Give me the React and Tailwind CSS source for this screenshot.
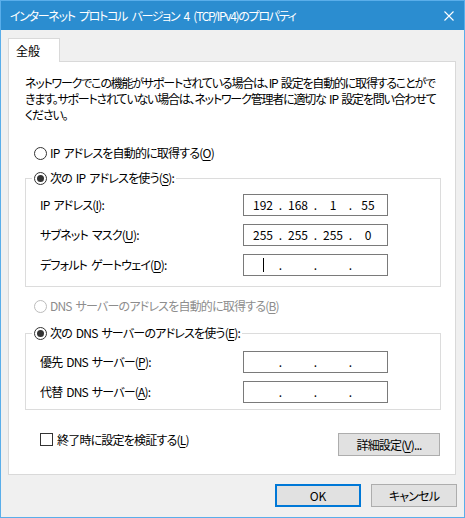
import React from "react";

function Radio({ checked, disabled }) {
  return (
    <span
      className={
        disabled
          ? "w-[13px] h-[13px] rounded-full border border-[#bcbcbc] bg-white flex items-center justify-center shrink-0"
          : "w-[13px] h-[13px] rounded-full border border-[#333333] bg-white flex items-center justify-center shrink-0"
      }
    >
      {checked && <span className="w-[7px] h-[7px] rounded-full bg-[#333333]" />}
    </span>
  );
}

function IPField({ parts = ["", "", "", ""], cursor = false }) {
  return (
    <div className="w-[145px] h-[22px] border border-[#7a7a7a] bg-white flex items-center pl-[3px] tracking-normal">
      {parts.map((p, i) => (
        <React.Fragment key={i}>
          {i === 0 && cursor ? (
            <span className="w-[32px] flex justify-center">
              <span className="w-px h-[14px] bg-black" />
            </span>
          ) : (
            <span className="w-[32px] text-center">{p}</span>
          )}
          {i < 3 && <span className="w-[3px] flex justify-center">.</span>}
        </React.Fragment>
      ))}
    </div>
  );
}

function U({ children }) {
  return <span className="underline underline-offset-2">{children}</span>;
}

function Row({ label, children }) {
  return (
    <div className="flex items-center h-[22px]">
      <span className="w-[203px]">{label}</span>
      {children}
    </div>
  );
}

export default function App() {
  return (
    <div className="w-[465px] h-[518px] border border-[#5aaeea] bg-[#f0f0f0] flex flex-col text-[12px] leading-[16px] tracking-[-0.8px] [word-spacing:2px] text-black font-['Noto_Sans_CJK_JP',sans-serif] [font-feature-settings:'palt']">
      <div className="h-[29px] shrink-0 bg-[#2b8dd0] flex items-center justify-between pl-[9px] pr-[10px] text-white">
        <span className="tracking-[-1.3px] [word-spacing:3px]">インターネット プロトコル バージョン 4 (TCP/IPv4)のプロパティ</span>
        <svg width="10" height="10" viewBox="0 0 10 10" className="block">
          <path d="M0.5 0.5 L9.5 9.5 M9.5 0.5 L0.5 9.5" stroke="white" strokeWidth="1.1" fill="none" />
        </svg>
      </div>
      <div className="pl-[7px] pr-[8px] pt-[8px]">
        <div className="flex">
          <div className="relative z-10 -mb-px h-[24px] w-[52px] pl-[7px] bg-white border border-b-0 border-[#d9d9d9] flex items-center tracking-normal">
            全般
          </div>
        </div>
        <div className="h-[414px] bg-white border border-[#d9d9d9] pl-[16px] pt-[13px] flex flex-col">
          <p className="whitespace-nowrap tracking-[-1.2px]">
            ネットワークでこの機能がサポートされている場合は、IP 設定を自動的に取得することがで
            <br />
            きます。サポートされていない場合は、ネットワーク管理者に適切な IP 設定を問い合わせて
            <br />
            ください。
          </p>

          <div className="mt-[22px] ml-[9px] flex items-center gap-[3px] h-[16px]">
            <Radio />
            <span>
              IP アドレスを自動的に取得する(<U>O</U>)
            </span>
          </div>

          <fieldset className="mt-[9px] w-[416px] border border-[#dcdcdc]">
            <legend className="ml-[6px] px-[2px]">
              <span className="flex items-center gap-[3px] h-[16px]">
                <Radio checked />
                <span>
                  次の IP アドレスを使う(<U>S</U>):
                </span>
              </span>
            </legend>
            <div className="pl-[14px] pt-[8px] pb-[10px] flex flex-col gap-[8px]">
              <Row
                label={
                  <>
                    IP アドレス(<U>I</U>):
                  </>
                }
              >
                <IPField parts={["192", "168", "1", "55"]} />
              </Row>
              <Row
                label={
                  <>
                    サブネット マスク(<U>U</U>):
                  </>
                }
              >
                <IPField parts={["255", "255", "255", "0"]} />
              </Row>
              <Row
                label={
                  <>
                    デフォルト ゲートウェイ(<U>D</U>):
                  </>
                }
              >
                <IPField cursor />
              </Row>
            </div>
          </fieldset>

          <div className="mt-[11px] ml-[9px] flex items-center gap-[3px] h-[16px] text-[#8d8d8d]">
            <Radio disabled />
            <span>
              DNS サーバーのアドレスを自動的に取得する(<U>B</U>)
            </span>
          </div>

          <fieldset className="mt-[11px] w-[416px] border border-[#dcdcdc]">
            <legend className="ml-[6px] px-[2px]">
              <span className="flex items-center gap-[3px] h-[16px]">
                <Radio checked />
                <span>
                  次の DNS サーバーのアドレスを使う(<U>E</U>):
                </span>
              </span>
            </legend>
            <div className="pl-[14px] pt-[10px] pb-[6px] flex flex-col gap-[8px]">
              <Row
                label={
                  <>
                    優先 DNS サーバー(<U>P</U>):
                  </>
                }
              >
                <IPField />
              </Row>
              <Row
                label={
                  <>
                    代替 DNS サーバー(<U>A</U>):
                  </>
                }
              >
                <IPField />
              </Row>
            </div>
          </fieldset>

          <div className="mt-[23px] w-[415px] flex items-start justify-between">
            <div className="ml-[15px] flex items-center gap-[4px] h-[13px]">
              <span className="w-[13px] h-[13px] border border-[#333333] bg-white shrink-0" />
              <span>
                終了時に設定を検証する(<U>L</U>)
              </span>
            </div>
            <button className="w-[102px] h-[23px] bg-[#e1e1e1] border border-[#adadad] flex items-center justify-center">
              詳細設定(<U>V</U>)...
            </button>
          </div>
        </div>
      </div>
      <div className="flex justify-end gap-[10px] pr-[7px] mt-[9px]">
        <button className="w-[86px] h-[23px] bg-[#e1e1e1] border-2 border-[#0078d7] flex items-center justify-center tracking-normal">
          OK
        </button>
        <button className="w-[86px] h-[23px] bg-[#e1e1e1] border border-[#adadad] flex items-center justify-center">
          キャンセル
        </button>
      </div>
    </div>
  );
}
